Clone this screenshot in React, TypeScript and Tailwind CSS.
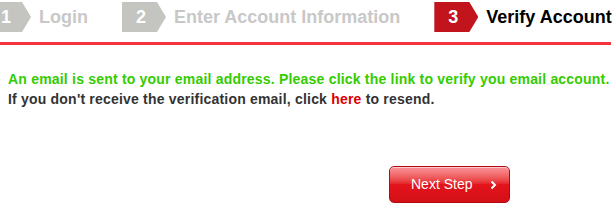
export default function App() {
  const steps = [
    { n: '1', label: 'Login', active: false },
    { n: '2', label: 'Enter Account Information', active: false },
    { n: '3', label: 'Verify Account', active: true },
  ]

  return (
    <div className="w-[616px] h-[206px] bg-white overflow-hidden font-['Liberation_Sans',Arial,sans-serif]">
      {/* steps */}
      <div className="flex items-center h-[30px] mt-[2px] -ml-[13px] gap-[34px]">
        {steps.map((s) => (
          <div key={s.n} className="flex items-center gap-[8px]">
            <div
              className={`w-[44px] h-[30px] pr-[9px] flex items-center justify-center text-[18px] font-bold text-white [clip-path:polygon(0_0,35px_0,44px_50%,35px_100%,0_100%)] ${
                s.active ? 'bg-[#c2141d]' : 'bg-[#c4c4c0]'
              }`}
            >
              <span className="pl-[3px]">{s.n}</span>
            </div>
            <span
              className={`text-[18px] font-bold leading-none ${
                s.active ? 'text-black' : 'text-[#c8c8c8]'
              }`}
            >
              {s.label}
            </span>
          </div>
        ))}
      </div>
      <div className="mt-[10px] h-[3px] w-[611px] bg-[#f3343e]" />

      {/* message */}
      <div className="pl-[8px] pt-[24px] text-[14px] tracking-[0.2px] font-bold leading-[20px] whitespace-nowrap">
        <p className="text-[#33cc00]">
          An email is sent to your email address. Please click the link to verify you email account.
        </p>
        <p className="text-[#333333]">
          If you don't receive the verification email, click{' '}
          <a className="text-[#dd0000] cursor-pointer">here</a> to resend.
        </p>
      </div>

      {/* button */}
      <div className="flex pl-[389px] pt-[57px]">
        <button className="relative w-[121px] h-[37px] rounded-[5px] border border-[#b00d12] bg-gradient-to-b from-[#f8646a] via-[#e3141c] to-[#d40f16] text-white text-[14px] tracking-normal flex items-center overflow-hidden shadow-[inset_0_1px_0_rgba(255,255,255,0.5)]">
          <span className="absolute left-0 right-0 top-0 h-[17px] bg-gradient-to-b from-white/30 to-white/5" />
          <span className="relative pl-[21px]">Next Step</span>
          <svg className="relative ml-[18px]" width="7" height="10" viewBox="0 0 7 10">
            <path d="M1.5 1.5 L5 5 L1.5 8.5" stroke="white" strokeWidth="2" fill="none" />
          </svg>
        </button>
      </div>
    </div>
  )
}
